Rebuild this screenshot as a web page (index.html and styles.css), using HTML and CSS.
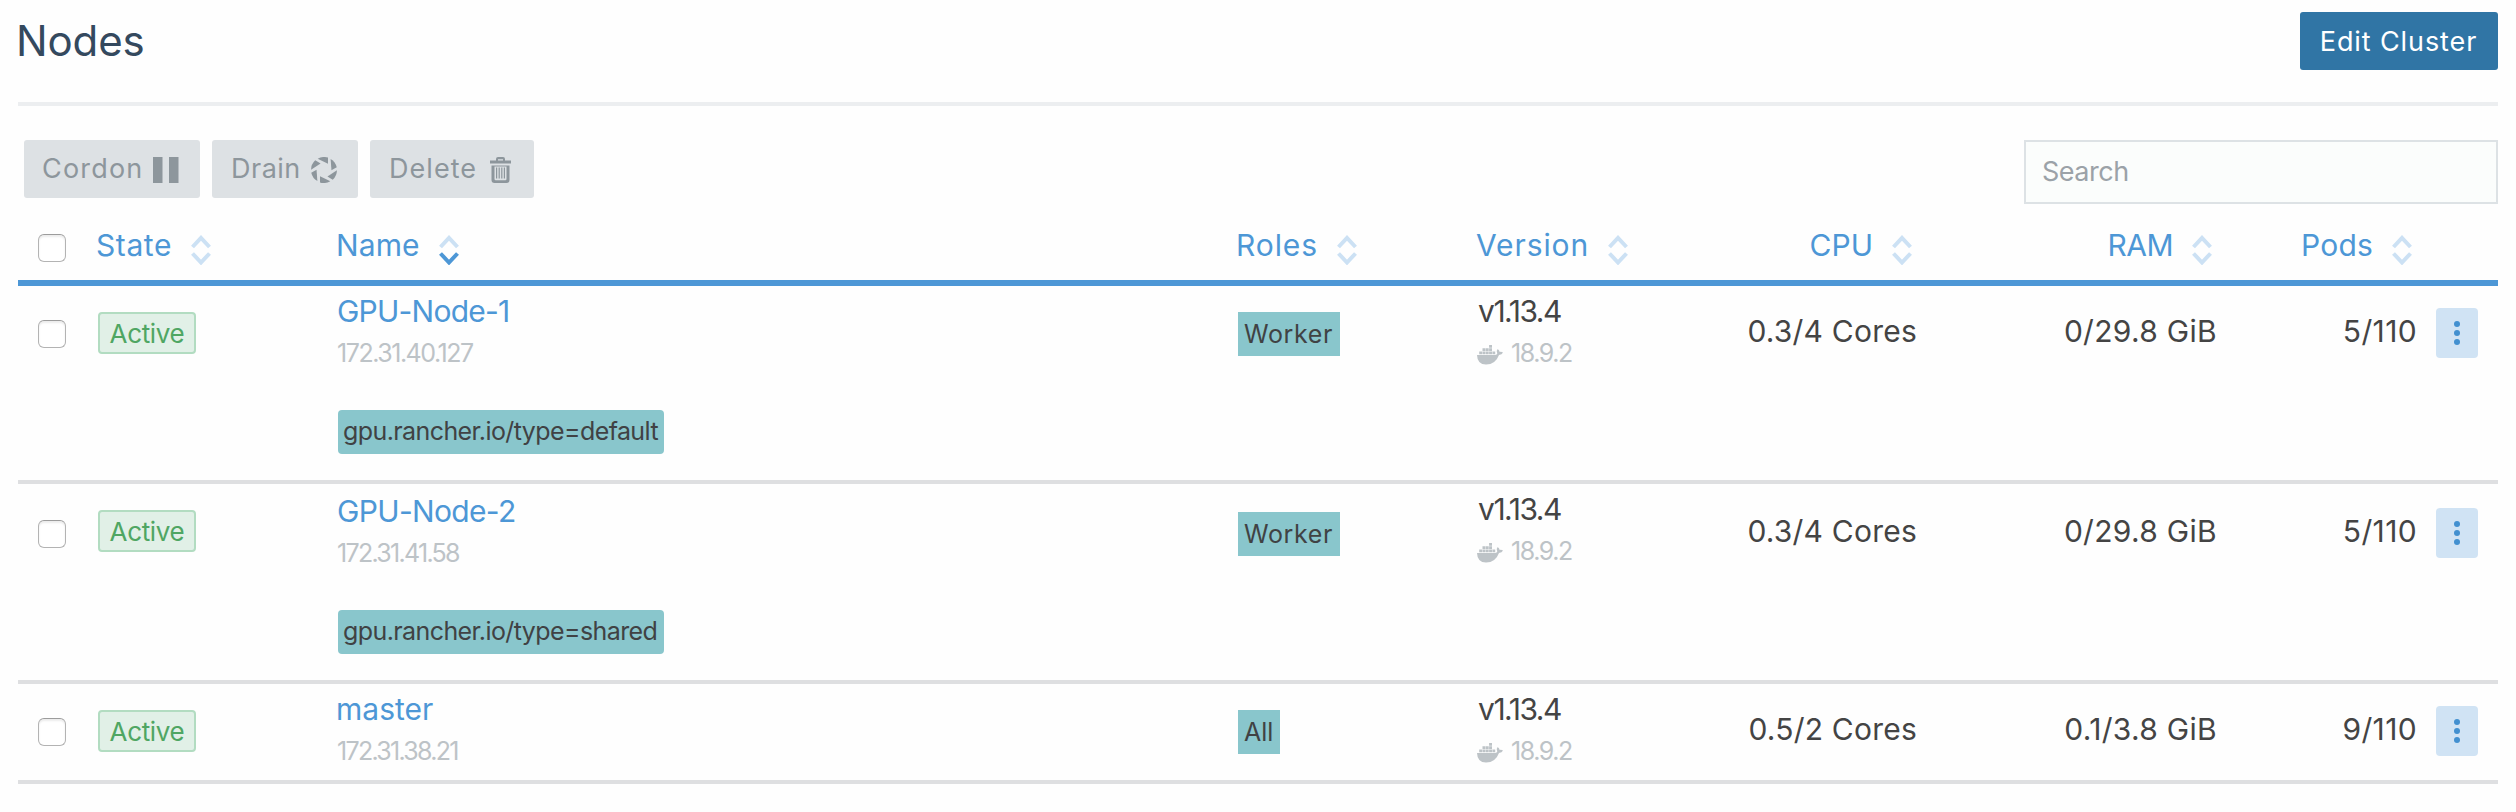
FILE: index.html
```html
<!DOCTYPE html>
<html lang="en">
<head>
<meta charset="utf-8">
<title>Nodes</title>
<link rel="stylesheet" href="styles.css">
</head>
<body>
<svg class="defs" aria-hidden="true">
  <symbol id="pause" viewBox="0 0 26 26"><path d="M0 0h9.5v26H0zM16 0h9.5v26H16z"/></symbol>
  <symbol id="drain" viewBox="0 0 26 26">
    <path id="blade" d="M6.700 1.700A13 13 0 0 1 17 .6V6.700Z"/>
    <use href="#blade" transform="rotate(60 13 13)"/><use href="#blade" transform="rotate(120 13 13)"/>
    <use href="#blade" transform="rotate(180 13 13)"/><use href="#blade" transform="rotate(240 13 13)"/>
    <use href="#blade" transform="rotate(300 13 13)"/>
  </symbol>
  <symbol id="trash" viewBox="0 0 21 26">
    <path d="M0 3.500h6V2q0-2 2-2h5q2 0 2 2v1.500h6v3H0zM8 2.200v1.300h5V2.200z"/>
    <path fill-rule="evenodd" d="M1.500 8.500h18V23q0 3-3 3h-12q-3 0-3-3zM4.500 9.500V22q0 1.200 1.200 1.200h9.600q1.200 0 1.200-1.200V9.500z"/>
    <path d="M6 10.500h1.200v11H6zM8.600 10.500h1.200v11H8.600zM11.200 10.500h1.200v11h-1.200zM13.800 10.500H15v11h-1.200z"/>
  </symbol>
  <symbol id="docker" viewBox="0 0 26 20">
    <path d="M0 10h17.500q2.200 0 2.800-1.500-1.500-2.500.4-4.500 1.800 1.300 2 3 1.800-.4 3.300.4-1 2.300-4 2.600Q18.500 19.500 9 19.500.300 19.500 0 10z"/>
    <path d="M2.200 6.500h2.900v2.800H2.200zM5.500 6.500h2.900v2.800H5.500zM8.800 6.500h2.900v2.800H8.800zM12.100 6.500H15v2.800h-2.900zM15.400 6.500h2.800v2.800h-2.800zM5.500 3.300h2.900v2.800H5.500zM8.800 3.300h2.900v2.800H8.800zM12.100 3.300H15v2.800h-2.900zM12.100 0H15v2.800h-2.900z"/>
  </symbol>
  <symbol id="sort" viewBox="0 0 20 30">
    <path d="M1.500 12L10 3l8.500 9"/><path class="down" d="M1.500 18.500l8.500 9 8.500-9"/>
  </symbol>
</svg>

<main class="page">
  <header class="top"><h1 class="title">Nodes</h1><button class="primary">Edit Cluster</button></header>

  <div class="toolbar">
    <div class="actions">
      <button class="bulk cordon"><span>Cordon</span><svg class="i-pause"><use href="#pause"/></svg></button>
      <button class="bulk drain"><span>Drain</span><svg class="i-drain"><use href="#drain"/></svg></button>
      <button class="bulk delete"><span>Delete</span><svg class="i-trash"><use href="#trash"/></svg></button>
    </div>
    <input class="search" type="text" placeholder="Search">
  </div>

  <section class="table">
    <div class="row head">
      <div class="check"><i class="box"></i></div>
      <div class="th"><span class="h-state">State</span><svg class="sort"><use href="#sort"/></svg></div>
      <div class="th"><span class="h-name">Name</span><svg class="sort sorted"><use href="#sort"/></svg></div>
      <div class="th"><span class="h-roles">Roles</span><svg class="sort"><use href="#sort"/></svg></div>
      <div class="th"><span class="h-version">Version</span><svg class="sort"><use href="#sort"/></svg></div>
      <div class="th right"><span class="h-cpu">CPU</span><svg class="sort"><use href="#sort"/></svg></div>
      <div class="th right"><span class="h-ram">RAM</span><svg class="sort"><use href="#sort"/></svg></div>
      <div class="th right"><span class="h-pods">Pods</span><svg class="sort"><use href="#sort"/></svg></div>
      <div></div>
    </div>

    <div class="row node">
      <div class="check"><i class="box"></i></div>
      <div class="state"><span class="badge">Active</span></div>
      <div class="name"><a class="link gpu1">GPU-Node-1</a><div class="sub ip-long">172.31.40.127</div><span class="tag">gpu.rancher.io/type=default</span></div>
      <div class="roles"><span class="role worker">Worker</span></div>
      <div class="version"><div class="v">v1.13.4</div><div class="sub engine"><svg><use href="#docker"/></svg><span>18.9.2</span></div></div>
      <div class="num cpu">0.3/4 Cores</div>
      <div class="num ram">0/29.8 GiB</div>
      <div class="num pods">5/110</div>
      <div class="menu"><button class="dots"><i></i><i></i><i></i></button></div>
    </div>

    <div class="row node low">
      <div class="check"><i class="box"></i></div>
      <div class="state"><span class="badge">Active</span></div>
      <div class="name"><a class="link gpu2">GPU-Node-2</a><div class="sub ip">172.31.41.58</div><span class="tag">gpu.rancher.io/type=shared</span></div>
      <div class="roles"><span class="role worker">Worker</span></div>
      <div class="version"><div class="v">v1.13.4</div><div class="sub engine"><svg><use href="#docker"/></svg><span>18.9.2</span></div></div>
      <div class="num cpu">0.3/4 Cores</div>
      <div class="num ram">0/29.8 GiB</div>
      <div class="num pods">5/110</div>
      <div class="menu"><button class="dots"><i></i><i></i><i></i></button></div>
    </div>

    <div class="row node short">
      <div class="check"><i class="box"></i></div>
      <div class="state"><span class="badge">Active</span></div>
      <div class="name"><a class="link master">master</a><div class="sub ip">172.31.38.21</div></div>
      <div class="roles"><span class="role all">All</span></div>
      <div class="version"><div class="v">v1.13.4</div><div class="sub engine"><svg><use href="#docker"/></svg><span>18.9.2</span></div></div>
      <div class="num cpu">0.5/2 Cores</div>
      <div class="num ram">0.1/3.8 GiB</div>
      <div class="num pods">9/110</div>
      <div class="menu"><button class="dots"><i></i><i></i><i></i></button></div>
    </div>
  </section>
</main>
</body>
</html>
```
FILE: styles.css
```css
* { box-sizing: border-box; }
body { margin: 0; background: #fefefe; color: #444; font-family: Inter, "Liberation Sans", sans-serif; }
button, input { font-family: inherit; border: 0; margin: 0; padding: 0; }
.defs { display: none; }
.page { padding: 0 18px; width: 2516px; height: 812px; }

.top { height: 106px; border-bottom: 4px solid #eceef0; display: flex; justify-content: space-between; align-items: flex-start; padding-top: 12px; }
.title { margin: 4px 0 0 -2px; font-size: 42px; line-height: 50px; font-weight: 400; letter-spacing: -.13px; color: #34495e; }
.primary { width: 198px; height: 58px; border-radius: 3px; background: #3075a5; color: #fff; font-size: 27px; line-height: 57px; letter-spacing: .9px; padding-right: 1px; }

.toolbar { display: flex; justify-content: space-between; align-items: flex-start; padding: 34px 0 0 6px; height: 112px; }
.actions { display: flex; gap: 12px; }
.bulk { display: flex; align-items: center; justify-content: space-between; height: 58px; border-radius: 3px; background: #dde1e4; color: #8d969c; font-size: 27px; line-height: 32px; padding: 0 21px 0 18px; }
.bulk svg { fill: #8d969c; height: 26px; margin-top: 1px; }
.cordon { width: 176px; letter-spacing: 1.2px; }
.drain { width: 146px; letter-spacing: .5px; padding-left: 19px; }
.delete { width: 164px; letter-spacing: 1.05px; padding-left: 19px; padding-right: 23px; }
.i-pause, .i-drain { width: 26px; }
.i-trash { width: 21px; }
.search { width: 474px; height: 64px; border: 2px solid #dde2e5; background: #fbfdfc; font-size: 27px; letter-spacing: -.5px; padding: 0 16px 2px; }
.search::placeholder { color: #9ba2a8; opacity: 1; }

.row { display: grid; grid-template-columns: 80px 240px 900px 240px 200px 240px 300px 200px 80px; }
.check { padding-left: 20px; }
.box { display: block; width: 28px; height: 28px; border: 1.5px solid #b3b3b3; border-top-color: #9c9c9c; border-radius: 6px; background: #fff; box-shadow: inset 0 2px 2px #ececec; }

.head { height: 68px; border-bottom: 6px solid #4d97d6; color: #4d97d6; }
.head .check { padding-top: 16px; }
.th { display: flex; align-items: flex-start; gap: 19px; padding-top: 9px; font-size: 30px; line-height: 36px; }
.th:not(.right) span { margin-left: -2px; }
.th.right { justify-content: flex-end; padding-right: 6px; }
.sort { --down: #cce1f4; width: 20px; height: 30px; margin-top: 8px; fill: none; stroke: #cce1f4; stroke-width: 4; }
.sorted { --down: #4d97d6; }
.down { stroke: var(--down); }
.h-state { letter-spacing: .6px; }
.h-name { letter-spacing: .09px; }
.h-roles { letter-spacing: .9px; }
.h-version { letter-spacing: .9px; }
.h-ram { letter-spacing: -.5px; }
.h-pods { letter-spacing: .2px; }

.node { height: 198px; border-bottom: 4px solid #dedfe1; }
.low { height: 200px; }
.short { height: 100px; }
.node .check { padding-top: 34px; }
.state { padding-top: 26px; }
.name { padding-top: 7px; }
.roles { padding-top: 26px; }
.version { padding-top: 7px; }
.num { padding: 27px 1px 0 0; text-align: right; font-size: 30px; line-height: 36px; }
.menu { padding: 22px 0 0 18px; }
.low .check { padding-top: 36px; }
.low .name { padding-top: 9px; }
.low .roles { padding-top: 28px; }
.low .num { padding-top: 29px; }
.low .menu { padding-top: 24px; }

.badge { display: block; width: 98px; height: 42px; border: 2px solid #b2dcc1; border-radius: 4px; background: #e1f0e7; color: #4fa663; font-size: 26px; line-height: 39px; letter-spacing: -.34px; text-align: center; }
.link { display: block; height: 36px; font-size: 30px; line-height: 36px; color: #4d97d6; margin-left: -1px; }
.master { margin-left: -2px; }
.gpu1 { letter-spacing: -.77px; }
.gpu2 { letter-spacing: -.66px; }
.sub { height: 30px; margin-top: 9px; font-size: 25px; line-height: 31px; color: #bdc3c7; }
.ip-long { letter-spacing: -1.47px; margin-left: -1px; }
.ip { letter-spacing: -1.7px; margin-left: -1px; }
.tag { display: block; width: 326px; height: 44px; margin-top: 42px; padding-left: 5px; border-radius: 4px; background: #89c6cc; color: #404244; font-size: 25px; line-height: 43px; letter-spacing: -.59px; white-space: nowrap; }
.role { display: block; height: 44px; padding-left: 6px; background: #89c6cc; color: #404244; font-size: 25px; line-height: 44px; }
.worker { width: 102px; letter-spacing: .6px; }
.all { width: 42px; }
.v { height: 36px; font-size: 30px; line-height: 36px; letter-spacing: -1.47px; }
.engine { display: flex; letter-spacing: -1.43px; }
.engine svg { width: 26px; height: 20px; margin: 7px 8px 0 -1px; fill: #bdc3c7; }
.cpu { letter-spacing: .22px; }
.ram { letter-spacing: .3px; }
.pods { letter-spacing: .35px; }
.dots { width: 42px; height: 50px; border-radius: 4px; background: #d0e3f4; display: flex; flex-direction: column; align-items: center; justify-content: center; gap: 3px; padding-bottom: 1px; }
.dots i { width: 6px; height: 6px; border-radius: 50%; background: #4290d0; }
```
